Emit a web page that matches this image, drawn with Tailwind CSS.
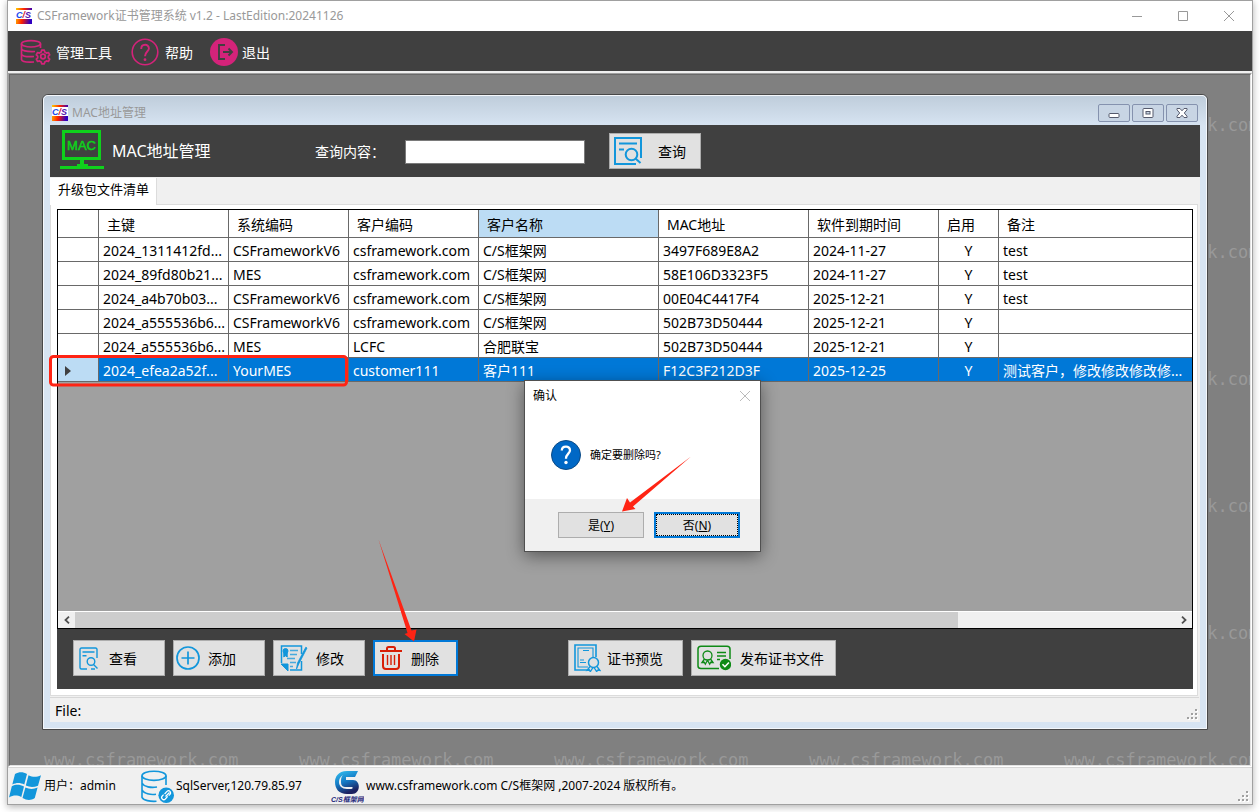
<!DOCTYPE html>
<html lang="zh-CN">
<head>
<meta charset="utf-8">
<title>CSFramework证书管理系统</title>
<script src="https://cdn.jsdelivr.net/npm/@tailwindcss/browser@4"></script>
</head>
<body class="relative h-screen overflow-hidden bg-white px-[7px] pb-[7px] font-['Noto_Sans','Noto_Sans_CJK_SC',sans-serif] text-sm text-black">
<svg class="absolute size-0" aria-hidden="true">
  <defs>
    <linearGradient id="fire" gradientUnits="userSpaceOnUse" x1="0" y1="0" x2="16" y2="3"><stop offset="0" stop-color="#ffd000"/><stop offset=".5" stop-color="#ff2000"/><stop offset="1" stop-color="#3000c0"/></linearGradient>
    <linearGradient id="sea" x1="0" y1="0" x2=".4" y2="1"><stop offset="0" stop-color="#35c3f2"/><stop offset=".55" stop-color="#1479c4"/><stop offset="1" stop-color="#1c2160"/></linearGradient>
    <symbol id="cs" viewBox="0 0 16 16">
      <rect width="16" height="16" fill="#fff"/><rect width="16" height="2" fill="url(#fire)"/><rect y="11" width="16" height="5" fill="url(#fire)"/>
      <text x="0" y="10" font-family="Liberation Sans" font-size="9" font-weight="bold" font-style="italic" fill="#1c4cf0">C<tspan fill="#d01030">/</tspan><tspan fill="#5010b0">S</tspan></text>
    </symbol>
    <symbol id="grip" viewBox="0 0 12 12">
      <path d="M9 1h2v2H9zM5 5h2v2H5zM9 5h2v2H9zM1 9h2v2H1zM5 9h2v2H5zM9 9h2v2H9z" fill="#fff"/>
      <path d="M8 0h2v2H8zM4 4h2v2H4zM8 4h2v2H8zM0 8h2v2H0zM4 8h2v2H4zM8 8h2v2H8z" fill="#a0a0a0"/>
    </symbol>
  </defs>
</svg>

<div class="flex h-full flex-col border border-[#a0a0a0] bg-[#f0f0f0] shadow-[0_2px_7px_rgba(0,0,0,0.3)]">
  <header class="flex h-[30px] shrink-0 items-center bg-white pl-2">
    <svg class="size-4"><use href="#cs"/></svg>
    <h1 class="ml-[5px] flex-1 text-xs text-[#999]">CSFramework证书管理系统 v1.2 - LastEdition:20241126</h1>
    <div class="flex">
      <button aria-label="最小化" class="grid h-[29px] w-[46px] place-items-center"><svg width="10" height="10"><path d="M0 5.5h10" stroke="#999"/></svg></button>
      <button aria-label="最大化" class="grid h-[29px] w-[46px] place-items-center"><svg width="10" height="10"><path d="M.5.5h9v9h-9z" fill="none" stroke="#999"/></svg></button>
      <button aria-label="关闭" class="grid h-[29px] w-[46px] place-items-center"><svg width="10" height="10"><path d="M0 0l10 10M10 0L0 10" stroke="#999"/></svg></button>
    </div>
  </header>

  <nav class="flex h-10 shrink-0 items-center bg-[#404040] pt-[2px] pl-3 text-white">
    <button class="flex w-[111px] items-center gap-[5px]">
      <svg width="31" height="26" viewBox="0 0 31 26" fill="none" stroke="#d4237a" stroke-width="1.7">
        <ellipse cx="11" cy="4.8" rx="9.5" ry="3.2"/>
        <path d="M1.500 4.800V20.500C2 22.500 7 23.500 14 23M20.500 4.800V9M1.500 10C3 12.500 8 12.800 15 12.500M1.500 15.500C3 17.500 8 18 14 17.500"/>
        <circle cx="23" cy="17.500" r="2.300"/>
        <path d="M21.700 11.200h2.600l.5 1.900 1.700 1 1.900-.6 1.300 2.300-1.400 1.300v1.800l1.400 1.300-1.300 2.300-1.900-.6-1.700 1-.5 1.900h-2.600l-.5-1.900-1.700-1-1.900.6-1.300-2.300 1.400-1.300v-1.800l-1.400-1.300 1.300-2.300 1.900.6 1.700-1z" stroke-linejoin="round"/>
      </svg><span class="pt-px">管理工具</span>
    </button>
    <button class="flex w-[79px] items-center gap-[6px]">
      <svg width="28" height="28" viewBox="0 0 28 28" fill="none" stroke="#d4237a" stroke-width="1.600"><circle cx="14" cy="14" r="12.800"/><path d="M10.200 11C10.200 5.500 18 5.500 17.900 10.500C17.900 13.500 14 13.800 14 18.300" stroke-width="1.900"/><circle cx="14" cy="21.700" r="1.400" fill="#d4237a" stroke="none"/></svg><span class="pt-px">帮助</span>
    </button>
    <button class="flex items-center gap-1">
      <svg width="28" height="28" viewBox="0 0 28 28"><circle cx="14" cy="14" r="14" fill="#d4237a"/><path d="M15 7H9v14h6M13 14h9M18.500 10.500L22 14l-3.500 3.500" fill="none" stroke="#404040" stroke-width="1.900"/></svg><span class="pt-px">退出</span>
    </button>
  </nav>

  <div class="mt-[2px] flex min-h-0 flex-1 flex-col border border-white border-t-[#a0a0a0] border-l-[#a0a0a0]">
    <main class="relative isolate flex min-h-0 flex-1 flex-col overflow-hidden border border-[#e3e3e3] border-t-[#696969] border-l-[#696969] bg-[#808080] pt-[19px] pr-[42px] pb-[35px] pl-8">
      <div aria-hidden="true" class="absolute top-[38px] left-[34px] -z-10 grid auto-rows-[127px] grid-cols-[repeat(5,255px)] font-['DejaVu_Sans_Mono',monospace] text-[17px] leading-6 text-[#999]">
        <span class="col-start-5">www.csframework.com</span>
        <span class="col-start-5">www.csframework.com</span>
        <span class="col-start-5">www.csframework.com</span>
        <span class="col-start-5">www.csframework.com</span>
        <span class="col-start-5">www.csframework.com</span>
        <span>www.csframework.com</span><span>www.csframework.com</span><span>www.csframework.com</span><span>www.csframework.com</span><span>www.csframework.com</span>
      </div>

      <section class="flex min-h-0 flex-1 flex-col rounded-t-md border border-[#484848] bg-[#d7e4f2]">
        <div class="flex min-h-0 flex-1 flex-col rounded-t-[5px] border border-[#f4f7fb] bg-linear-to-b from-[#bfcddb] to-[#d7e4f2] to-[30px] px-[6px] pb-[6px]">
          <div class="flex h-[29px] shrink-0 items-center pt-1">
            <svg class="ml-[2px] size-4"><use href="#cs"/></svg>
            <h2 class="ml-1 flex-1 pt-px text-xs text-[#999]">MAC地址管理</h2>
            <div class="mr-[2px] flex gap-[2px]">
              <button aria-label="最小化" class="grid h-[18px] w-8 place-items-center rounded-xs border border-[#8592ae] bg-[#c8d5e4]"><svg width="12" height="14"><rect x="1" y="7.500" width="10" height="4" rx="1" fill="#fff" stroke="#555a6c"/></svg></button>
              <button aria-label="还原" class="grid h-[18px] w-8 place-items-center rounded-xs border border-[#8592ae] bg-[#c8d5e4]"><svg width="12" height="10"><rect x="1" y=".5" width="10" height="9" rx="1" fill="#fff" stroke="#555a6c"/><rect x="4" y="3.500" width="4" height="2.500" fill="#c8d5e4" stroke="#555a6c"/></svg></button>
              <button aria-label="关闭" class="grid h-[18px] w-8 place-items-center rounded-xs border border-[#8592ae] bg-[#c8d5e4]"><svg width="12" height="10" viewBox="0 0 12 10"><path d="M1 .5h3l2 2.300L8 .5h3v1.300L8.300 5 11 8.200v1.300H8L6 7.200 4 9.500H1V8.200L3.700 5 1 1.800z" fill="#fff" stroke="#555a6c"/></svg></button>
            </div>
          </div>

          <div class="flex min-h-0 flex-1 flex-col bg-[#f0f0f0]">
            <div class="flex h-[52px] shrink-0 items-center bg-[#404040] pl-[9px] text-white">
              <svg class="mb-1 shrink-0" width="47" height="42" viewBox="0 0 47 42"><path d="M4.500 3.500h36v27h-36z" fill="none" stroke="#0fd11c" stroke-width="3"/><path d="M21 32h4v4h4v2h16v3H1v-3h17v-2h3z" fill="#0fd11c"/><text x="22.500" y="22" text-anchor="middle" font-family="Liberation Sans" font-size="13" fill="#0fd11c" stroke="#0fd11c" stroke-width=".5">MAC</text></svg>
              <h3 class="ml-[6px] w-[203px] text-base">MAC地址管理</h3>
              <label for="query" class="w-[90px] pt-[2px]">查询内容：</label>
              <input id="query" type="text" class="mt-[2px] h-6 w-[180px] border border-[#7a7a7a] bg-white px-1 text-black">
              <button class="ml-6 flex h-9 w-[92px] items-center border border-[#adadad] bg-[#e1e1e1] pl-1 text-black">
                <svg width="28" height="28" viewBox="0 0 28 28" fill="none" stroke="#1296db" stroke-width="2"><path d="M27 21V1H1v26h21M5 6.500h18M5 12.500h5"/><circle cx="17.500" cy="17.500" r="5.800"/><path d="M21.500 21.500l5 4.500"/></svg>
                <span class="ml-4 pt-[2px]">查询</span>
              </button>
            </div>

            <div class="flex shrink-0 pt-px"><button class="z-10 -mb-px h-[27px] border-r border-[#dcdcdc] bg-white pr-[7px] pb-[6px] pl-2 text-[13px] leading-5">升级包文件清单</button></div>
            <div class="mr-[2px] flex min-h-0 flex-1 flex-col border border-[#dcdcdc] bg-white pt-1 pr-1 pb-[6px] pl-[6px]">
              <div class="flex min-h-0 flex-1 flex-col border border-black bg-[#a0a0a0]">
                <table class="w-full table-fixed border-separate border-spacing-0 bg-white text-left leading-5 [&_td]:h-6 [&_td]:border-r [&_td]:border-b [&_td]:border-[#696969] [&_td]:px-1 [&_td]:py-0 [&_td]:pt-[3px] [&_td]:whitespace-nowrap [&_td:nth-child(8)]:text-center [&_th]:h-7 [&_th]:border-r [&_th]:border-b [&_th]:border-[#696969] [&_th]:py-0 [&_th]:pt-[2px] [&_th]:pl-2 [&_th]:font-normal [&_tr>*:last-child]:border-r-0">
                  <colgroup><col class="w-[41px]"><col class="w-[130px]"><col class="w-[120px]"><col class="w-[130px]"><col class="w-[180px]"><col class="w-[150px]"><col class="w-[130px]"><col class="w-[60px]"><col></colgroup>
                  <thead><tr><th></th><th>主键</th><th>系统编码</th><th>客户编码</th><th class="bg-[#bcdcf4]">客户名称</th><th>MAC地址</th><th>软件到期时间</th><th>启用</th><th>备注</th></tr></thead>
                  <tbody>
                    <tr><td></td><td>2024_1311412fd...</td><td>CSFrameworkV6</td><td>csframework.com</td><td>C/S框架网</td><td>3497F689E8A2</td><td>2024-11-27</td><td>Y</td><td>test</td></tr>
                    <tr><td></td><td>2024_89fd80b21...</td><td>MES</td><td>csframework.com</td><td>C/S框架网</td><td>58E106D3323F5</td><td>2024-11-27</td><td>Y</td><td>test</td></tr>
                    <tr><td></td><td>2024_a4b70b03...</td><td>CSFrameworkV6</td><td>csframework.com</td><td>C/S框架网</td><td>00E04C4417F4</td><td>2025-12-21</td><td>Y</td><td>test</td></tr>
                    <tr><td></td><td>2024_a555536b6...</td><td>CSFrameworkV6</td><td>csframework.com</td><td>C/S框架网</td><td>502B73D50444</td><td>2025-12-21</td><td>Y</td><td></td></tr>
                    <tr><td></td><td>2024_a555536b6...</td><td>MES</td><td>LCFC</td><td>合肥联宝</td><td>502B73D50444</td><td>2025-12-21</td><td>Y</td><td></td></tr>
                    <tr class="bg-[#0078d7] text-white"><td class="bg-[#bcdcf4]"><svg class="ml-[3px]" width="6" height="10"><path d="M0 0l6 5-6 5z" fill="#404040"/></svg></td><td>2024_efea2a52f...</td><td>YourMES</td><td>customer111</td><td>客户111</td><td>F12C3F212D3F</td><td>2025-12-25</td><td>Y</td><td>测试客户，修改修改修改修...</td></tr>
                  </tbody>
                </table>
                <div class="mt-auto flex h-[17px] shrink-0 border-t border-white bg-[#f0f0f0]">
                  <button aria-label="向左滚动" class="grid w-[17px] place-items-center"><svg width="6" height="8"><path d="M5 .7L1.500 4 5 7.300" fill="none" stroke="#505050" stroke-width="1.800"/></svg></button>
                  <div class="flex-1"><div class="h-full bg-[#cdcdcd]" style="width:80.300%"></div></div>
                  <button aria-label="向右滚动" class="grid w-[17px] place-items-center"><svg width="6" height="8"><path d="M1 .7L4.500 4 1 7.300" fill="none" stroke="#505050" stroke-width="1.800"/></svg></button>
                </div>
              </div>

              <div class="flex h-[60px] shrink-0 items-start gap-2 bg-[#404040] px-4 pt-[11px]">
                <button class="flex h-9 w-[92px] items-center gap-[11px] border border-[#adadad] bg-[#e1e1e1] pl-[5px]">
                  <svg width="19" height="23" viewBox="0 0 19 23" fill="none" stroke="#1296db" stroke-width="1.400"><path d="M18 11V2.500Q18 1 16.500 1h-14Q1 1 1 2.500v18Q1 22 2.500 22H8M3.500 5h12M3.500 8.800h4"/><circle cx="12" cy="14.500" r="3.800"/><path d="M14.500 17.500l4 4M12 22h4"/></svg><span class="pt-px">查看</span>
                </button>
                <button class="flex h-9 w-[92px] items-center gap-2 border border-[#adadad] bg-[#e1e1e1] pl-[2px]">
                  <svg width="24" height="24" viewBox="0 0 24 24" fill="none" stroke="#1296db" stroke-width="1.700"><circle cx="12" cy="12" r="11"/><path d="M12 5.500v13M5.500 12h13"/></svg><span class="pt-px">添加</span>
                </button>
                <button class="flex h-9 w-[92px] items-center gap-2 border border-[#adadad] bg-[#e1e1e1] pl-[6px]">
                  <svg width="28" height="28" viewBox="0 0 28 28" fill="none" stroke="#1296db"><path d="M1.500 19V2h20v8M21.500 17v9H10" stroke-width="1.500"/><path d="M10 6.500h8M10 10.500h7M7 14.500h8M10 18.500h6M10 22.500h3" stroke-width="1.400" opacity=".75"/><path d="M1 20h7v7z" fill="#1296db"/><circle cx="5.500" cy="7" r="2.500" fill="#1296db"/><path d="M3.800 9v4l1.700-1.200L7.200 13V9z" fill="#1296db"/><path d="M27 4L19 19.500 16.500 25l1-6L25.800 3.200z" fill="#1296db" stroke-width=".8"/></svg><span class="pt-px">修改</span>
                </button>
                <button class="flex h-9 w-[85px] items-center gap-[9px] border-2 border-[#0078d7] bg-[#e1e1e1] pl-[5px]">
                  <svg width="22" height="24" viewBox="0 0 22 24" fill="none" stroke="#d81e06" stroke-width="2"><path d="M0 5h22M7 5V2.500Q7 1 8.500 1h5Q15 1 15 2.500V5M3 8v12q0 3 3 3h10q3 0 3-3V8"/><path d="M7.500 9v10M11 9v10M14.500 9v10" stroke-width="1.400"/></svg><span class="pt-px">删除</span>
                </button>
                <button class="ml-[102px] flex h-9 w-[115px] items-center gap-[6px] border border-[#adadad] bg-[#e1e1e1] pl-[5px]">
                  <svg width="27" height="28" viewBox="0 0 27 28" fill="none" stroke="#1296db" stroke-width="1.100"><path d="M22 13V1H1v25h15" stroke-width="1.600"/><path d="M19 13V4H4v19h10M9 6.500h6M6 16h4M6 18.500h6"/><circle cx="19.500" cy="18.500" r="5" stroke-width="1.500"/><path d="M16 22.500l-3 4 2.500-.3.800 1.500 2.700-4.200M23 22.500l3 4-2.500-.3-.8 1.500-2.700-4.200" stroke-width="1.300"/></svg><span class="pt-px">证书预览</span>
                </button>
                <button class="flex h-9 w-[145px] items-center gap-[9px] border border-[#adadad] bg-[#e1e1e1] pl-[5px]">
                  <svg width="34" height="26" viewBox="0 0 34 26" fill="none" stroke="#0e8a16" stroke-width="1.300"><path d="M22 23.500H4Q1 23.500 1 21V4Q1 1.200 4 1.200h26q3 0 3 2.800v10" stroke-width="1.500"/><circle cx="10.500" cy="10.500" r="4.500"/><path d="M7.500 14L5 17.500l2.300-.2 1 1.900 2.200-4M13.500 14l2.500 3.500-2.300-.2-1 1.900-2.200-4M20 7.500h9M20 11h9M20 14.500h3"/><circle cx="28.500" cy="19.500" r="5.700" fill="#0e8a16" stroke="none"/><path d="M25.500 19.300l2.400 2.400 4-4.200" stroke="#fff" stroke-width="1.600"/></svg><span class="pt-px">发布证书文件</span>
                </button>
              </div>
            </div>

            <footer class="mt-px mr-px flex h-[25px] shrink-0 items-center justify-between border-t border-[#d7d7d7] pl-[5px]"><span class="pt-px">File:</span><svg class="mt-[9px] size-3"><use href="#grip"/></svg></footer>
          </div>
        </div>
      </section>
    </main>
  </div>

  <footer class="flex h-[37px] shrink-0 items-center border-t border-[#d7d7d7] text-xs">
    <div class="flex w-[133px] items-center gap-[3px] pl-px">
      <svg width="32" height="30" viewBox="0 0 32 30" fill="#1296db"><path d="M6 3C10 .5 14 .5 18 3L15.300 13.500C11 11.500 7.500 11.500 3.300 13.500zM19.500 4.200C24 6.500 27.500 6.300 32 4.200L29 14.700C25 16.500 21 16.600 16.800 14.600zM2.800 15.200C7 13 10.800 13.300 15 15.500L12.300 26C8 24 4.500 24 0 26.500zM16.400 16.400C20.500 18.400 24.500 18.300 28.600 16.500L25.800 27C21.500 29.800 18 29.500 13.500 27z"/></svg>用户：admin
    </div>
    <div class="flex w-[189px] items-center gap-[2px]">
      <svg width="33" height="33" viewBox="0 0 33 33"><g fill="none" stroke="#1296db" stroke-width="1.600"><ellipse cx="13" cy="5.800" rx="12" ry="4.600"/><path d="M1 5.800v21.500c1.500 3 8 4.500 14.500 4M25 5.800V15M1 13c2 4 9 5 15 4M1 20c2 3.500 8 5 14 4.300"/></g><circle cx="25.200" cy="25.200" r="7.800" fill="#1296db"/><path d="M24.500 26.500l4-4M23.600 24l2.400-2.600a2 2 0 013 3l-1.300 1.300M26.700 26.400l-2.400 2.600a2 2 0 01-3-3l1.300-1.300" fill="none" stroke="#fff" stroke-width="1.200"/></svg>SqlServer,120.79.85.97
    </div>
    <div class="flex flex-1 items-center gap-[2px]">
      <svg width="34" height="33" viewBox="0 0 34 33"><path d="M28 1H17C8 1 5 7 5 12c0 7 4 12 12 12h5c9 0 9-14 1-14h-7V7h9zM11 12c0 4 2 5 5 5h6c1 0 1 2-1 2h-4c-5 0-8-3-8-7 0-3 1-5 4-7-2 2-2 4-2 7z" fill="url(#sea)" fill-rule="evenodd"/><text x="1" y="32" font-family="Liberation Sans, Noto Sans CJK SC" font-size="7" font-weight="bold" font-style="italic" fill="#23267a">C/S框架网</text></svg>www.csframework.com C/S框架网 ,2007-2024 版权所有。
    </div>
    <svg class="mt-[22px] mr-[2px] size-3"><use href="#grip"/></svg>
  </footer>
</div>

<div role="dialog" aria-labelledby="dlg-title" class="absolute top-[380px] left-[524px] flex h-[172px] w-[237px] flex-col border border-[#505050] bg-[#f0f0f0] text-xs shadow-[0_4px_16px_rgba(0,0,0,0.45)]">
  <div class="flex flex-1 flex-col bg-white">
    <div class="flex h-[29px] items-center justify-between pr-[10px] pl-2"><h2 id="dlg-title">确认</h2><button aria-label="关闭"><svg width="10" height="10"><path d="M0 0l10 10M10 0L0 10" stroke="#bbb"/></svg></button></div>
    <div class="mt-[30px] flex items-center gap-[9px] pl-[26px] text-[11px]">
      <svg width="30" height="30" viewBox="0 0 30 30"><circle cx="15" cy="15" r="14.500" fill="#0068c6" stroke="#0c4a85"/><path d="M10.800 10.500C10.800 5.500 19 5.300 19 10.200C19 13.800 15 13.700 15 18.800" fill="none" stroke="#fff" stroke-width="2.300"/><circle cx="15" cy="22.500" r="1.700" fill="#fff"/></svg>确定要删除吗?
    </div>
  </div>
  <div class="flex h-[52px] justify-end gap-[10px] pt-[13px] pr-5">
    <button class="h-[26px] w-[86px] border border-[#adadad] bg-[#e1e1e1] pt-px">是(<u>Y</u>)</button>
    <button class="h-[26px] w-[86px] border-2 border-[#0078d7] bg-[#e1e1e1] pt-px outline-1 -outline-offset-3 outline-black outline-dotted">否(<u>N</u>)</button>
  </div>
</div>

<svg class="pointer-events-none absolute top-0 left-0" width="760" height="660" aria-hidden="true">
  <rect x="50.500" y="356.500" width="296" height="28.500" rx="3" fill="none" stroke="#ff2414" stroke-width="3"/>
  <path d="M691 456.500L633 506.500 635.500 509 622 511.500 627 498 630 502.500z" fill="#ff2414"/>
  <path d="M378.500 539.500L411.500 630.500 416.500 629.500 414 641.500 404.500 634 407.500 633z" fill="#ff2414"/>
</svg>
</body>
</html>
